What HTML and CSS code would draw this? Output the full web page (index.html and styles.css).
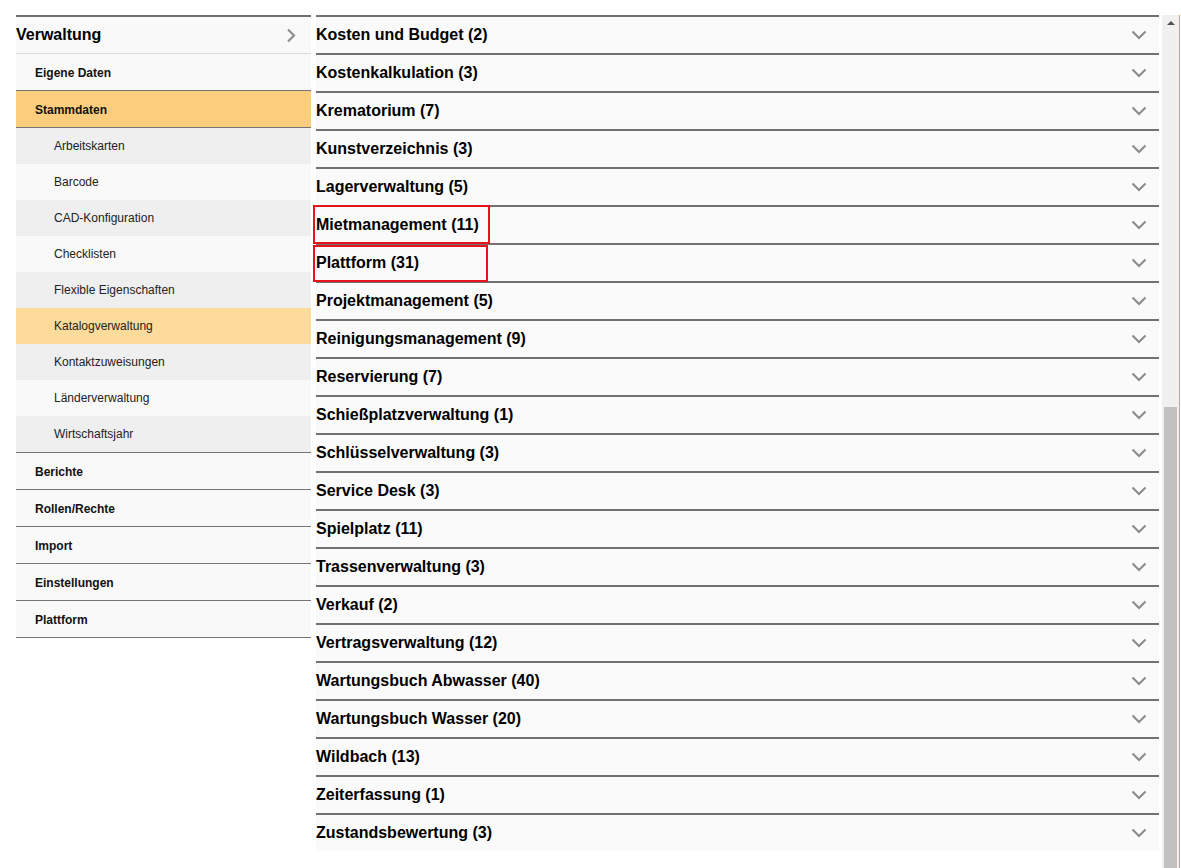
FILE: index.html
```html
<!DOCTYPE html>
<html lang="de">
<head>
<meta charset="utf-8">
<title>Katalogverwaltung</title>
<link rel="stylesheet" href="styles.css">
</head>
<body>
<div class="page">
  <nav class="sidebar">
    <div class="nav-head">
      <span>Verwaltung</span>
      <svg class="chev-right" width="10" height="15" viewBox="0 0 10 15"><polyline points="2,1.5 8,7.5 2,13.5" fill="none" stroke="#8e8e8e" stroke-width="2.2"/></svg>
    </div>
    <div class="nav-item first">Eigene Daten</div>
    <div class="nav-item active">Stammdaten</div>
    <div class="sub-list">
      <div class="sub-item">Arbeitskarten</div>
      <div class="sub-item">Barcode</div>
      <div class="sub-item">CAD-Konfiguration</div>
      <div class="sub-item">Checklisten</div>
      <div class="sub-item">Flexible Eigenschaften</div>
      <div class="sub-item selected">Katalogverwaltung</div>
      <div class="sub-item">Kontaktzuweisungen</div>
      <div class="sub-item">Länderverwaltung</div>
      <div class="sub-item">Wirtschaftsjahr</div>
    </div>
    <div class="nav-item">Berichte</div>
    <div class="nav-item">Rollen/Rechte</div>
    <div class="nav-item">Import</div>
    <div class="nav-item">Einstellungen</div>
    <div class="nav-item last">Plattform</div>
  </nav>

  <main class="catalog">
    <div class="cat-row"><span class="cat-label">Kosten und Budget (2)</span><svg class="chev-down" width="16" height="10" viewBox="0 0 16 10"><polyline points="1.5,1.5 8,8 14.5,1.5" fill="none" stroke="#8a8a8a" stroke-width="2"/></svg></div>
    <div class="cat-row"><span class="cat-label">Kostenkalkulation (3)</span><svg class="chev-down" width="16" height="10" viewBox="0 0 16 10"><polyline points="1.5,1.5 8,8 14.5,1.5" fill="none" stroke="#8a8a8a" stroke-width="2"/></svg></div>
    <div class="cat-row"><span class="cat-label">Krematorium (7)</span><svg class="chev-down" width="16" height="10" viewBox="0 0 16 10"><polyline points="1.5,1.5 8,8 14.5,1.5" fill="none" stroke="#8a8a8a" stroke-width="2"/></svg></div>
    <div class="cat-row"><span class="cat-label">Kunstverzeichnis (3)</span><svg class="chev-down" width="16" height="10" viewBox="0 0 16 10"><polyline points="1.5,1.5 8,8 14.5,1.5" fill="none" stroke="#8a8a8a" stroke-width="2"/></svg></div>
    <div class="cat-row"><span class="cat-label">Lagerverwaltung (5)</span><svg class="chev-down" width="16" height="10" viewBox="0 0 16 10"><polyline points="1.5,1.5 8,8 14.5,1.5" fill="none" stroke="#8a8a8a" stroke-width="2"/></svg></div>
    <div class="cat-row"><span class="cat-label mark mark-a">Mietmanagement (11)</span><svg class="chev-down" width="16" height="10" viewBox="0 0 16 10"><polyline points="1.5,1.5 8,8 14.5,1.5" fill="none" stroke="#8a8a8a" stroke-width="2"/></svg></div>
    <div class="cat-row"><span class="cat-label mark mark-b">Plattform (31)</span><svg class="chev-down" width="16" height="10" viewBox="0 0 16 10"><polyline points="1.5,1.5 8,8 14.5,1.5" fill="none" stroke="#8a8a8a" stroke-width="2"/></svg></div>
    <div class="cat-row"><span class="cat-label">Projektmanagement (5)</span><svg class="chev-down" width="16" height="10" viewBox="0 0 16 10"><polyline points="1.5,1.5 8,8 14.5,1.5" fill="none" stroke="#8a8a8a" stroke-width="2"/></svg></div>
    <div class="cat-row"><span class="cat-label">Reinigungsmanagement (9)</span><svg class="chev-down" width="16" height="10" viewBox="0 0 16 10"><polyline points="1.5,1.5 8,8 14.5,1.5" fill="none" stroke="#8a8a8a" stroke-width="2"/></svg></div>
    <div class="cat-row"><span class="cat-label">Reservierung (7)</span><svg class="chev-down" width="16" height="10" viewBox="0 0 16 10"><polyline points="1.5,1.5 8,8 14.5,1.5" fill="none" stroke="#8a8a8a" stroke-width="2"/></svg></div>
    <div class="cat-row"><span class="cat-label">Schießplatzverwaltung (1)</span><svg class="chev-down" width="16" height="10" viewBox="0 0 16 10"><polyline points="1.5,1.5 8,8 14.5,1.5" fill="none" stroke="#8a8a8a" stroke-width="2"/></svg></div>
    <div class="cat-row"><span class="cat-label">Schlüsselverwaltung (3)</span><svg class="chev-down" width="16" height="10" viewBox="0 0 16 10"><polyline points="1.5,1.5 8,8 14.5,1.5" fill="none" stroke="#8a8a8a" stroke-width="2"/></svg></div>
    <div class="cat-row"><span class="cat-label">Service Desk (3)</span><svg class="chev-down" width="16" height="10" viewBox="0 0 16 10"><polyline points="1.5,1.5 8,8 14.5,1.5" fill="none" stroke="#8a8a8a" stroke-width="2"/></svg></div>
    <div class="cat-row"><span class="cat-label">Spielplatz (11)</span><svg class="chev-down" width="16" height="10" viewBox="0 0 16 10"><polyline points="1.5,1.5 8,8 14.5,1.5" fill="none" stroke="#8a8a8a" stroke-width="2"/></svg></div>
    <div class="cat-row"><span class="cat-label">Trassenverwaltung (3)</span><svg class="chev-down" width="16" height="10" viewBox="0 0 16 10"><polyline points="1.5,1.5 8,8 14.5,1.5" fill="none" stroke="#8a8a8a" stroke-width="2"/></svg></div>
    <div class="cat-row"><span class="cat-label">Verkauf (2)</span><svg class="chev-down" width="16" height="10" viewBox="0 0 16 10"><polyline points="1.5,1.5 8,8 14.5,1.5" fill="none" stroke="#8a8a8a" stroke-width="2"/></svg></div>
    <div class="cat-row"><span class="cat-label">Vertragsverwaltung (12)</span><svg class="chev-down" width="16" height="10" viewBox="0 0 16 10"><polyline points="1.5,1.5 8,8 14.5,1.5" fill="none" stroke="#8a8a8a" stroke-width="2"/></svg></div>
    <div class="cat-row"><span class="cat-label">Wartungsbuch Abwasser (40)</span><svg class="chev-down" width="16" height="10" viewBox="0 0 16 10"><polyline points="1.5,1.5 8,8 14.5,1.5" fill="none" stroke="#8a8a8a" stroke-width="2"/></svg></div>
    <div class="cat-row"><span class="cat-label">Wartungsbuch Wasser (20)</span><svg class="chev-down" width="16" height="10" viewBox="0 0 16 10"><polyline points="1.5,1.5 8,8 14.5,1.5" fill="none" stroke="#8a8a8a" stroke-width="2"/></svg></div>
    <div class="cat-row"><span class="cat-label">Wildbach (13)</span><svg class="chev-down" width="16" height="10" viewBox="0 0 16 10"><polyline points="1.5,1.5 8,8 14.5,1.5" fill="none" stroke="#8a8a8a" stroke-width="2"/></svg></div>
    <div class="cat-row"><span class="cat-label">Zeiterfassung (1)</span><svg class="chev-down" width="16" height="10" viewBox="0 0 16 10"><polyline points="1.5,1.5 8,8 14.5,1.5" fill="none" stroke="#8a8a8a" stroke-width="2"/></svg></div>
    <div class="cat-row"><span class="cat-label">Zustandsbewertung (3)</span><svg class="chev-down" width="16" height="10" viewBox="0 0 16 10"><polyline points="1.5,1.5 8,8 14.5,1.5" fill="none" stroke="#8a8a8a" stroke-width="2"/></svg></div>
  </main>

  <div class="scrollbar">
    <div class="scroll-up"></div>
    <div class="scroll-thumb"></div>
  </div>
</div>
</body>
</html>
```

FILE: styles.css
```css
* {
  box-sizing: border-box;
}

html, body {
  margin: 0;
  padding: 0;
  background: #ffffff;
  overflow: hidden;
}

body {
  font-family: "Liberation Sans", Arial, sans-serif;
  color: #000;
}

.page {
  display: flex;
  align-items: flex-start;
  padding: 15px 0 0 16px;
  height: 868px;
}

/* ---------- Sidebar ---------- */
.sidebar {
  width: 295px;
  flex: none;
  border-top: 2px solid #717171;
}

.nav-head {
  height: 37px;
  display: flex;
  align-items: center;
  justify-content: space-between;
  padding-right: 15px;
  background: #f9f9f9;
  border-bottom: 1px solid #dcdcdc;
  font-size: 16px;
  font-weight: bold;
  color: #000;
}

.chev-right {
  display: block;
}

.nav-item {
  height: 37px;
  display: flex;
  align-items: center;
  padding-left: 19px;
  padding-top: 1px;
  background: #f9f9f9;
  border-bottom: 1px solid #747474;
  font-size: 12px;
  font-weight: bold;
  color: #111;
}

.nav-item.active {
  background: #fccd7d;
}

.sub-list {
  border-bottom: 1px solid #747474;
}

.sub-item {
  height: 36px;
  display: flex;
  align-items: center;
  padding-left: 38px;
  font-size: 12px;
  color: #222;
  background: #efefef;
}

.sub-item:nth-child(even) {
  background: #f9f9f9;
}

.sub-item.selected {
  background: #fddb9b;
}

/* ---------- Catalog list ---------- */
.catalog {
  width: 843px;
  flex: none;
  margin-left: 5px;
}

.cat-row {
  height: 38px;
  display: flex;
  align-items: center;
  justify-content: space-between;
  padding-right: 12px;
  background: #fafafa;
  border-top: 2px solid #717171;
  font-size: 16px;
  font-weight: bold;
  color: #000;
}

.cat-label {
  position: relative;
}

.mark::after {
  content: "";
  position: absolute;
  left: -3px;
  width: 173px;
  border: 2px solid #e8141b;
}

.mark-a::after {
  top: -11px;
  height: 35px;
}

.mark-b::after {
  top: -9px;
  height: 33px;
  width: 171px;
}

.chev-down {
  display: block;
}

/* ---------- Scrollbar ---------- */
.scrollbar {
  width: 18px;
  height: 853px;
  flex: none;
  margin-left: 3px;
  background: #f0f0f0;
  border-right: 1px solid #e9a04e;
  display: flex;
  flex-direction: column;
  align-items: center;
}

.scroll-up {
  width: 0;
  height: 0;
  margin-top: 6px;
  border-left: 4px solid transparent;
  border-right: 4px solid transparent;
  border-bottom: 4px solid #505050;
}

.scroll-thumb {
  width: 13px;
  margin-top: 382px;
  flex: 1;
  background: #c1c1c1;
  margin-right: 1px;
}
```
